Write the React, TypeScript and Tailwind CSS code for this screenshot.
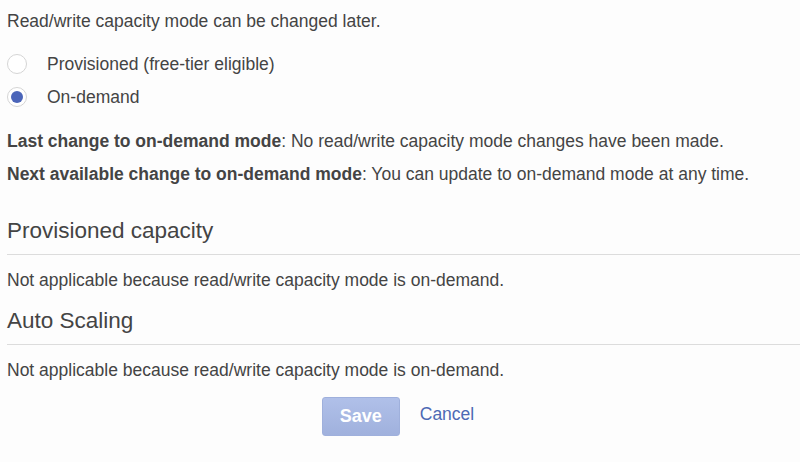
import React from "react";

function Radio({ checked, label }: { checked?: boolean; label: string }) {
  return (
    <label className="flex items-center h-6">
      <span className="w-5 h-5 rounded-full border border-[#d5d5d5] bg-white flex items-center justify-center">
        {checked && <span className="w-3 h-3 rounded-full bg-[#4b65b9]"></span>}
      </span>
      <span className="ml-5">{label}</span>
    </label>
  );
}

function Section({ title }: { title: string }) {
  return (
    <div>
      <h2 className="text-[22.5px] leading-7">{title}</h2>
      <div className="border-t border-[#dcdcdc] mt-[9px] mb-[13px]"></div>
      <p className="leading-6">Not applicable because read/write capacity mode is on-demand.</p>
    </div>
  );
}

export default function App() {
  return (
    <div
      className="min-h-screen bg-[#fdfdfd] text-[#444] text-[17.5px] pl-[7px] pt-[9px]"
      style={{ fontFamily: '"Liberation Sans", Arial, sans-serif' }}
    >
      <p className="leading-6">Read/write capacity mode can be changed later.</p>
      <div className="flex flex-col gap-[9px] mt-[19px]">
        <Radio label="Provisioned (free-tier eligible)" />
        <Radio checked label="On-demand" />
      </div>
      <p className="leading-6 mt-[20px]">
        <span className="font-bold">Last change to on-demand mode</span>: No read/write capacity mode changes have been made.
      </p>
      <p className="leading-6 mt-[9px]">
        <span className="font-bold">Next available change to on-demand mode</span>: You can update to on-demand mode at any time.
      </p>
      <div className="mt-[31px]">
        <Section title="Provisioned capacity" />
      </div>
      <div className="mt-[15px]">
        <Section title="Auto Scaling" />
      </div>
      <div className="flex items-center justify-center gap-5 mt-[15px] pr-[11px]">
        <button className="w-[78px] h-[39px] rounded-[3px] border border-[#9fb0dc] bg-gradient-to-b from-[#b0c0e9] to-[#a0b1dd] text-white font-bold text-[18px]">
          Save
        </button>
        <a href="#" className="text-[#4d69b4] -mt-1">Cancel</a>
      </div>
    </div>
  );
}
